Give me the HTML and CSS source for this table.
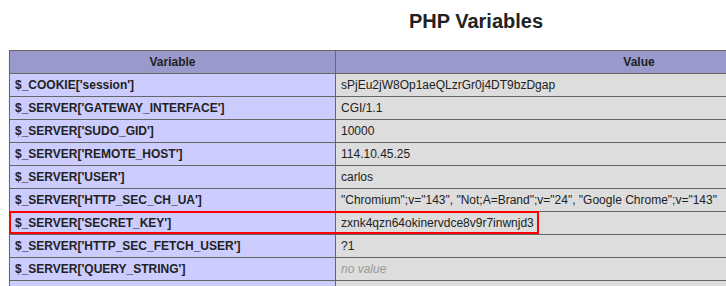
FILE: index.html
```html
<!DOCTYPE html>
<html>
<head>
<meta charset="utf-8">
<link rel="stylesheet" href="styles.css">
</head>
<body>
<div class="page">
  <h2 class="title">PHP Variables</h2>
  <div class="wrap">
    <table class="vars">
      <tr class="h"><th class="c1">Variable</th><th>Value</th></tr>
      <tr><td class="e">$_COOKIE['session']</td><td class="v">sPjEu2jW8Op1aeQLzrGr0j4DT9bzDgap</td></tr>
      <tr><td class="e">$_SERVER['GATEWAY_INTERFACE']</td><td class="v">CGI/1.1</td></tr>
      <tr><td class="e">$_SERVER['SUDO_GID']</td><td class="v">10000</td></tr>
      <tr><td class="e">$_SERVER['REMOTE_HOST']</td><td class="v">114.10.45.25</td></tr>
      <tr><td class="e">$_SERVER['USER']</td><td class="v">carlos</td></tr>
      <tr><td class="e">$_SERVER['HTTP_SEC_CH_UA']</td><td class="v">"Chromium";v="143", "Not;A=Brand";v="24", "Google Chrome";v="143"</td></tr>
      <tr><td class="e">$_SERVER['SECRET_KEY']</td><td class="v">zxnk4qzn64okinervdce8v9r7inwnjd3</td></tr>
      <tr><td class="e">$_SERVER['HTTP_SEC_FETCH_USER']</td><td class="v">?1</td></tr>
      <tr><td class="e">$_SERVER['QUERY_STRING']</td><td class="v"><i>no value</i></td></tr>
      <tr><td class="e">&nbsp;</td><td class="v">&nbsp;</td></tr>
    </table>
    <div class="highlight"></div>
  </div>
</div>
</body>
</html>
```
FILE: styles.css
```css
html, body {
  margin: 0;
  padding: 0;
  background: #fff;
  overflow: hidden;
}
body {
  font-family: "Liberation Sans", Arial, sans-serif;
  color: #222;
}
.page {
  width: 934px;
  padding: 10px 0 0 9px;
}
.title {
  margin: 0 0 17px;
  font-size: 20px;
  line-height: 23px;
  font-weight: bold;
  text-align: center;
  color: #222;
}
.wrap {
  position: relative;
}
.vars {
  width: 934px;
  border-collapse: collapse;
  box-shadow: 1px 2px 3px #ccc;
}
.vars th, .vars td {
  border: 1px solid #666;
  font-size: 12px;
  line-height: 14px;
  padding: 4px 5px;
  vertical-align: baseline;
  text-align: left;
  white-space: nowrap;
}
.vars .h th {
  background: #99c;
  font-weight: bold;
  text-align: center;
}
.vars .c1 {
  width: 315px;
}
.vars .e {
  background: #ccf;
  font-weight: bold;
  width: 315px;
}
.vars .v {
  background: #ddd;
}
.vars .v i {
  color: #999;
}
.highlight {
  position: absolute;
  left: 0;
  top: 161px;
  width: 526px;
  height: 19px;
  border: 2px solid #f00;
}
```
